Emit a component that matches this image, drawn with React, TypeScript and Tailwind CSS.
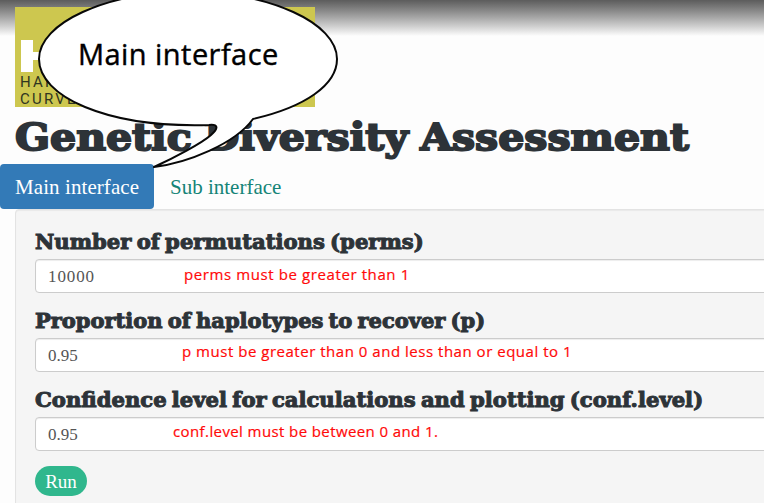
import React from "react";

type FieldProps = {
  label: string;
  value: string;
  note: string;
  labelClass: string;
  valueClass: string;
  noteClass: string;
};

function Field({ label, value, note, labelClass, valueClass, noteClass }: FieldProps) {
  return (
    <div className="mb-[15px] h-16">
      <label
        className={`block h-[30px] origin-left whitespace-nowrap font-['DejaVu_Serif',serif] text-[20px] font-bold leading-[26px] text-[#2d3338] [-webkit-text-stroke:1px_#2d3338] [word-spacing:-2px] ${labelClass}`}
      >
        {label}
      </label>
      <div className="relative flex h-[34px] w-[800px] items-center rounded border border-[#ccc] bg-white px-3 pt-0.5 shadow-[inset_0_1px_1px_rgba(0,0,0,0.075)]">
        <span className={`font-['Liberation_Serif',serif] text-[17px] leading-5 text-[#555] ${valueClass}`}>{value}</span>
        <span
          className={`absolute whitespace-nowrap font-['Open_Sans',sans-serif] text-[15px] leading-5 text-[#ff0909] [-webkit-text-stroke:0.2px_#ff0909] ${noteClass}`}
        >
          {note}
        </span>
      </div>
    </div>
  );
}

function SpeechBubble() {
  return (
    <div className="absolute left-0 top-0 h-[175px] w-[350px]">
      <svg className="block" width="350" height="175" viewBox="0 0 350 175" fill="none">
        <path
          d="M253 119C305 107 337 85 337 59C337 23 270-8 188-8C106-8 39 23 39 59C39 96 105 128 209 125C218 124 219 128 211 135C202 143 174 158 154 167C187 163 235 144 253 119Z"
          fill="white"
          stroke="#080808"
          strokeWidth="2"
          strokeLinejoin="round"
        />
      </svg>
      <span className="absolute left-[78px] top-[34px] whitespace-nowrap font-['Open_Sans',sans-serif] text-[29px] leading-10 tracking-[0.45px] text-black [-webkit-text-stroke:0.4px_black]">
        Main interface
      </span>
    </div>
  );
}

export default function App() {
  return (
    <div className="relative h-[503px] w-[764px] overflow-hidden bg-[#fdfdfd]">
      <div className="h-9 bg-linear-to-b from-[#5c5c5c] to-[#fdfdfd] px-[15px] pt-[7px]">
        <div className="h-[100px] w-[300px] bg-[#cdc74f] px-[5px] pt-[33px] font-['Roboto',sans-serif] text-[15px] leading-[17px] tracking-[2.2px] text-[#303520]">
          <svg className="ml-px block" width="40" height="32" viewBox="0 0 40 32">
            <path d="M0 0H12V12H28V0H40V32H28V20H12V32H0Z" fill="white" />
          </svg>
          <div className="mt-0.5">HAPLOTYPE</div>
          <div>CURVE</div>
        </div>
      </div>
      <h1 className="mt-[71px] h-[57px] whitespace-nowrap pl-[15px] pt-[7px] font-['DejaVu_Serif',serif] text-[38px] font-bold leading-[46px] text-[#2d3338] [-webkit-text-stroke:2px_#2d3338]">
        <span className="inline-block origin-left scale-x-[1.08] [word-spacing:-2px]">Genetic Diversity Assessment</span>
      </h1>
      <nav className="flex h-[45px] gap-px whitespace-nowrap font-['Liberation_Serif',serif] text-[21px] leading-[47px]">
        <a className="w-[154px] rounded bg-[#337ab7] pl-[15px] tracking-[0.08px] text-white">Main interface</a>
        <a className="pl-[15px] text-[#158477]">Sub interface</a>
      </nav>
      <main className="ml-[15px] h-[320px] w-[800px] rounded border border-[#e3e3e3] bg-[#f5f5f5] px-[19px] pt-[19px] shadow-[inset_0_1px_1px_rgba(0,0,0,0.05)]">
        <Field
          label="Number of permutations (perms)"
          value="10000"
          note="perms must be greater than 1"
          labelClass="scale-x-[1.057]"
          valueClass="tracking-[0.9px]"
          noteClass="left-[148px] top-[4px] tracking-[0.6px]"
        />
        <Field
          label="Proportion of haplotypes to recover (p)"
          value="0.95"
          note="p must be greater than 0 and less than or equal to 1"
          labelClass="scale-x-[1.05]"
          valueClass=""
          noteClass="left-[146px] top-[2px] tracking-[0.52px]"
        />
        <Field
          label="Confidence level for calculations and plotting (conf.level)"
          value="0.95"
          note="conf.level must be between 0 and 1."
          labelClass="scale-x-[1.057]"
          valueClass=""
          noteClass="left-[137px] top-[3px] tracking-[0.4px]"
        />
        <button className="block h-[30px] w-[52px] rounded-full bg-[#30b78d] font-['Liberation_Serif',serif] text-[19px] leading-[31px] text-white">
          Run
        </button>
      </main>
      <SpeechBubble />
    </div>
  );
}
